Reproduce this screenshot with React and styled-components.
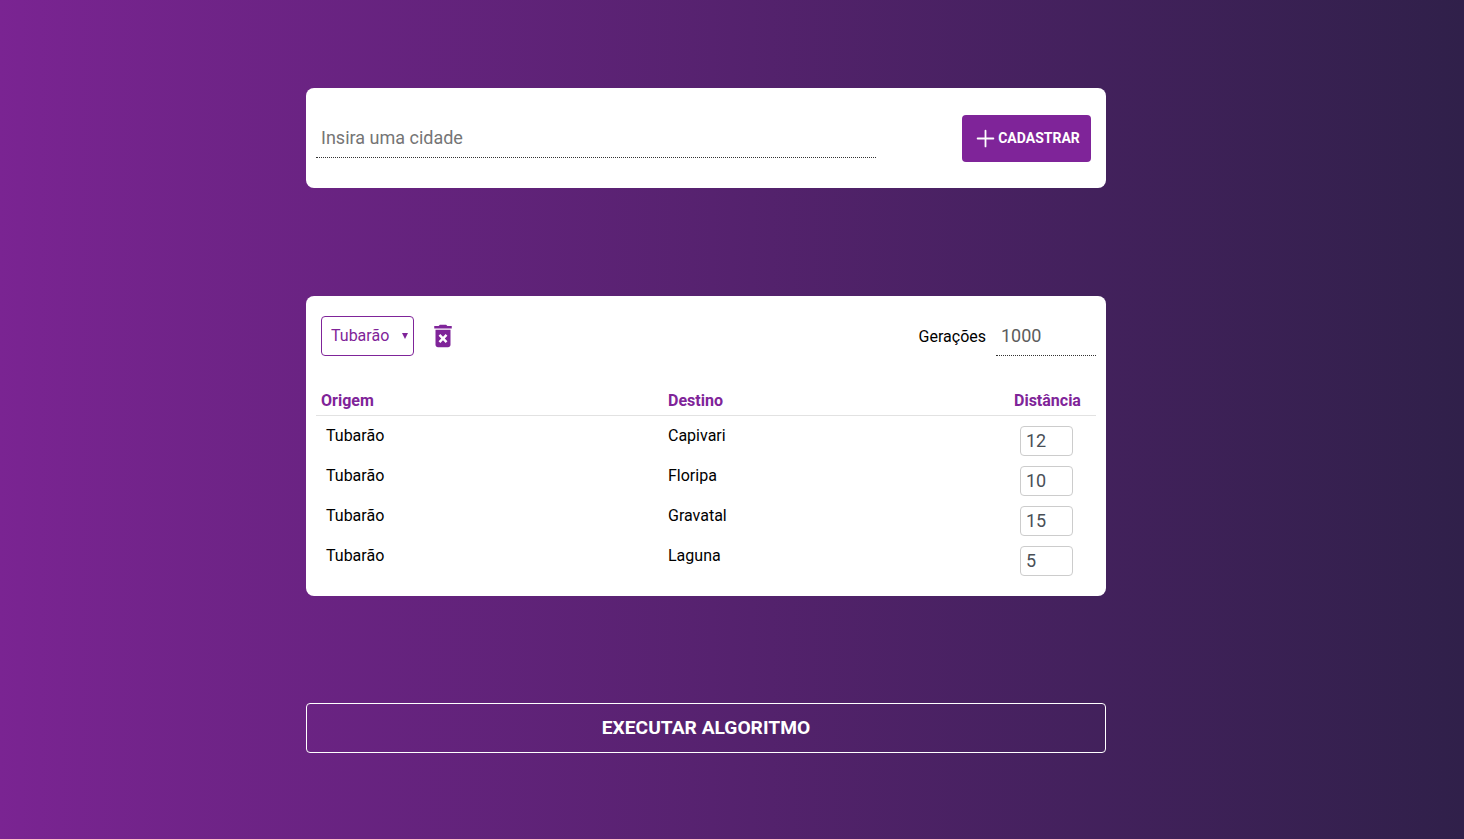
import styled, { createGlobalStyle } from "styled-components"
import { MdDeleteForever } from "react-icons/md"
import { Plus } from "lucide-react"

const purple = "#7f2499"

const GlobalStyle = createGlobalStyle`
  * {
    box-sizing: border-box;
  }
  html, body {
    margin: 0;
    padding: 0;
  }
  body {
    font-family: Roboto, "Liberation Sans", sans-serif;
  }
`
const Page = styled.div`
  display: flex;
  flex-direction: column;
  height: 839px;
  padding: 88px 0 0 306px;
  overflow: hidden;
  background: linear-gradient(to right, #7a2492, #30204a);
`
const Card = styled.section`
  width: 800px;
  height: ${(p) => p.$height}px;
  margin-bottom: ${(p) => p.$gap}px;
  border-radius: 8px;
  background-color: #fff;
`
const CityCard = styled(Card)`
  display: flex;
  align-items: center;
  justify-content: space-between;
  padding: 0 15px 0 10px;
`
const LineInput = styled.input`
  height: ${(p) => p.$height}px;
  width: ${(p) => p.$width}px;
  padding: 0 5px;
  border: 0;
  border-bottom: 1px dotted #333;
  outline: none;
  font-family: inherit;
  font-size: ${(p) => p.$size}px;
  color: #5c5c5c;
  background: transparent;
  &::placeholder {
    color: #757575;
    opacity: 1;
  }
`
const AddButton = styled.button`
  display: flex;
  align-items: center;
  justify-content: center;
  gap: 0;
  width: 129px;
  height: 47px;
  padding: 0 1px 0 0;
  border: 0;
  border-radius: 4px;
  background-color: ${purple};
  color: #fff;
  font-family: inherit;
  font-size: 14px;
  font-weight: 700;
  svg {
    margin-right: -1px;
  }
`
const TableCard = styled(Card)`
  padding: 20px 10px 0;
`
const Toolbar = styled.div`
  display: flex;
  align-items: flex-start;
  justify-content: space-between;
  height: 60px;
`
const ToolGroup = styled.div`
  display: flex;
  align-items: center;
  height: 40px;
`
const SelectWrap = styled.div`
  position: relative;
  margin-left: 5px;
  &::after {
    content: "";
    position: absolute;
    left: 81px;
    top: 17px;
    border-left: 3px solid transparent;
    border-right: 3px solid transparent;
    border-top: 6px solid ${purple};
    pointer-events: none;
  }
`
const CitySelect = styled.select`
  display: block;
  width: 93px;
  height: 40px;
  padding: 0 0 2px 9px;
  border: 1px solid ${purple};
  border-radius: 4px;
  outline: none;
  appearance: none;
  background-color: #fff;
  color: ${purple};
  font-family: inherit;
  font-size: 16px;
`
const TrashButton = styled.button`
  display: flex;
  margin-left: 14px;
  padding: 0;
  border: 0;
  background: none;
  color: ${purple};
`
const GenLabel = styled.label`
  margin-right: 10px;
  font-size: 16px;
  color: #000;
`
const Row = styled.div`
  display: grid;
  grid-template-columns: 352px 346px 82px;
`
const HeadRow = styled(Row)`
  height: 40px;
  align-items: end;
  padding-bottom: 5px;
  border-bottom: 1px solid #e2e2e2;
  margin-bottom: 10px;
`
const HeadCell = styled.div`
  padding-left: ${(p) => p.$indent}px;
  color: ${purple};
  font-size: 16px;
  font-weight: 700;
`
const BodyRow = styled(Row)`
  height: 40px;
`
const Cell = styled.div`
  padding-left: ${(p) => p.$indent}px;
  font-size: 16px;
  line-height: 19px;
  color: #000;
`
const DistanceInput = styled.input`
  display: block;
  width: 53px;
  height: 30px;
  margin-left: 6px;
  padding: 0 5px 2px;
  border: 1px solid #ccc;
  border-radius: 4px;
  outline: none;
  font-family: inherit;
  font-size: 18px;
  color: #495057;
`
const RunButton = styled.button`
  width: 800px;
  height: 50px;
  flex-shrink: 0;
  padding: 0 0 2px;
  border: 1px solid #fff;
  border-radius: 4px;
  background: transparent;
  color: #fff;
  font-family: inherit;
  font-size: 19.2px;
  font-weight: 700;
`

const routes = [
  { to: "Capivari", distance: 12 },
  { to: "Floripa", distance: 10 },
  { to: "Gravatal", distance: 15 },
  { to: "Laguna", distance: 5 },
]

const App = () => {
  return (
    <Page>
      <GlobalStyle />
      <CityCard $height={100} $gap={108}>
        <LineInput $width={560} $height={40} $size={18} placeholder="Insira uma cidade" />
        <AddButton>
          <Plus size={27} strokeWidth={1.6} absoluteStrokeWidth={false} />
          CADASTRAR
        </AddButton>
      </CityCard>
      <TableCard $height={300} $gap={107}>
        <Toolbar>
          <ToolGroup>
            <SelectWrap>
              <CitySelect defaultValue="Tubarão">
                <option>Tubarão</option>
                <option>Capivari</option>
              </CitySelect>
            </SelectWrap>
            <TrashButton>
              <MdDeleteForever size={30} />
            </TrashButton>
          </ToolGroup>
          <ToolGroup>
            <GenLabel>Gerações</GenLabel>
            <LineInput $width={100} $height={40} $size={18} defaultValue="1000" />
          </ToolGroup>
        </Toolbar>
        <HeadRow>
          <HeadCell $indent={5}>Origem</HeadCell>
          <HeadCell $indent={0}>Destino</HeadCell>
          <HeadCell $indent={0}>Distância</HeadCell>
        </HeadRow>
        {routes.map((route) => (
          <BodyRow key={route.to}>
            <Cell $indent={10}>Tubarão</Cell>
            <Cell $indent={0}>{route.to}</Cell>
            <div>
              <DistanceInput defaultValue={route.distance} />
            </div>
          </BodyRow>
        ))}
      </TableCard>
      <RunButton>EXECUTAR ALGORITMO</RunButton>
    </Page>
  )
}

export default App
